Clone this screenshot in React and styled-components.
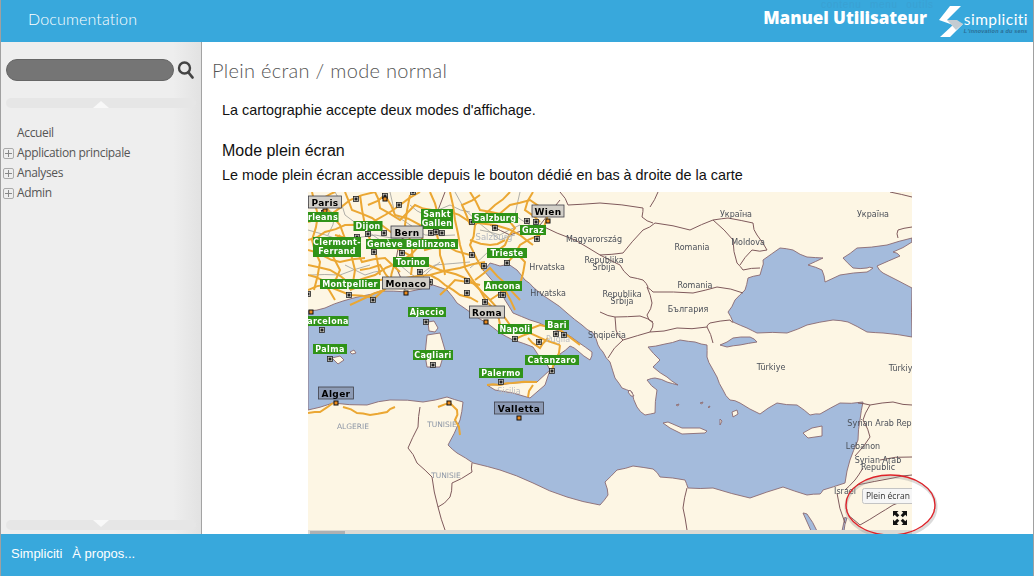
import React from 'react';
import styled, { createGlobalStyle } from 'styled-components';

const GlobalStyle = createGlobalStyle`
  html, body {
    margin: 0;
    padding: 0;
    height: 100%;
    overflow: hidden;
    background: #fff;
  }
  #root {
    height: 100%;
  }
`;

const Page = styled.div`
  display: flex;
  flex-direction: column;
  height: 576px;
  box-sizing: border-box;
  border-left: 1px solid #a0a0a0;
  border-right: 1px solid #a0a0a0;
  font-family: 'Liberation Sans', Arial, sans-serif;
`;

const Header = styled.header`
  position: relative;
  display: flex;
  align-items: center;
  flex: 0 0 42px;
  height: 42px;
  padding: 0 5px 0 27px;
  box-sizing: border-box;
  background: #38a8dc;
  color: #fff;
`;

const DocTitle = styled.div`
  flex: 1;
  margin-bottom: 6px;
  font-family: Lato, sans-serif;
  font-size: 16px;
  font-weight: 300;
  letter-spacing: 0.15px;
`;

const GhostLinks = styled.div`
  position: absolute;
  top: 0;
  left: 820px;
  color: #3aa1d3;
  font-size: 10px;
  line-height: 9px;
  letter-spacing: 0.7px;
  word-spacing: 5px;
  white-space: nowrap;
`;

const ManualTitle = styled.div`
  margin: 0 11px 6px 0;
  font-family: 'Open Sans', sans-serif;
  font-size: 17px;
  font-weight: 800;
  line-height: 16px;
  letter-spacing: -0.05px;
  white-space: nowrap;
`;

const Logo = styled.div`
  display: flex;
  align-items: flex-start;
  height: 32px;
  margin-top: 1px;
`;

const LogoText = styled.div`
  display: flex;
  flex-direction: column;
  padding-top: 6px;
`;

const LogoName = styled.span`
  font-family: Lato, sans-serif;
  font-size: 15.5px;
  font-weight: 400;
  line-height: 15px;
  letter-spacing: 0.45px;
`;

const LogoTag = styled.span`
  font-family: 'Liberation Sans', sans-serif;
  font-size: 5.5px;
  font-style: italic;
  font-weight: 700;
  line-height: 8px;
  letter-spacing: 0.2px;
  color: #2a6f96;
  white-space: nowrap;
`;

const Main = styled.div`
  display: flex;
  flex: 1;
  min-height: 0;
`;

const Sidebar = styled.aside`
  display: flex;
  flex-direction: column;
  flex: 0 0 201px;
  box-sizing: border-box;
  padding: 17px 5px 4px;
  background: linear-gradient(to right, #eeeeee 86%, #e2e2e2 100%);
  border-right: 1px solid #a3a3a3;
`;

const SearchRow = styled.div`
  display: flex;
  align-items: center;
  gap: 3px;
`;

const SearchField = styled.div`
  width: 168px;
  height: 22px;
  box-sizing: border-box;
  background: #757575;
  border: 1px solid #666;
  border-radius: 11px;
`;

const ScrollBar = styled.div`
  display: flex;
  justify-content: center;
  align-items: ${props => (props.$down ? 'flex-start' : 'flex-end')};
  width: 190px;
  height: 10px;
  margin-top: ${props => (props.$down ? 'auto' : '17px')};
  background: #e6e6e6;
  border-radius: 5px;
`;

const Triangle = styled.div`
  width: 0;
  height: 0;
  border-left: 8px solid transparent;
  border-right: 8px solid transparent;
  border-${props => (props.$down ? 'top' : 'bottom')}: 7px solid #f8f8f8;
`;

const Tree = styled.ul`
  margin: 14px 0 0 -3px;
  padding: 0;
  list-style: none;
`;

const TreeRow = styled.li`
  display: flex;
  align-items: center;
  gap: 3px;
  height: 20px;
  color: #555;
  font-family: 'Open Sans', sans-serif;
  font-size: 12px;
  letter-spacing: -0.35px;
`;

const PlusBox = styled.span`
  position: relative;
  flex: 0 0 11px;
  width: 11px;
  height: 11px;
  box-sizing: border-box;
  margin-top: 2px;
  border: 1px solid #aaa;
  border-radius: 2px;
  visibility: ${props => (props.$hidden ? 'hidden' : 'visible')};

  &::before {
    content: '';
    position: absolute;
    left: 1px;
    right: 1px;
    top: 4px;
    height: 1px;
    background: #888;
  }

  &::after {
    content: '';
    position: absolute;
    top: 1px;
    bottom: 1px;
    left: 4px;
    width: 1px;
    background: #888;
  }
`;

const Content = styled.main`
  flex: 1;
  min-width: 0;
  overflow: hidden;
  padding: 16px 0 0 10px;
  background: #fff;
  color: #111;
`;

const PageTitle = styled.h1`
  margin: 0;
  font-family: Lato, sans-serif;
  font-size: 20px;
  font-weight: 300;
  line-height: 24px;
  letter-spacing: 0.3px;
  color: #555;
`;

const Body = styled.div`
  padding-left: 10px;
`;

const Paragraph = styled.p`
  margin: ${props => props.$top || 0}px 0 0;
  font-size: 14.4px;
  line-height: 20px;
`;

const SubTitle = styled.h3`
  margin: 21px 0 0;
  font-size: 16px;
  font-weight: 400;
  line-height: 20px;
`;

const MapFigure = styled.figure`
  margin: 7px 0 0 86px;
  width: 632px;
  height: 342px;
`;

const MapSvg = styled.svg`
  display: block;
  filter: blur(0.35px);
`;

const Footer = styled.footer`
  display: flex;
  align-items: center;
  gap: 10px;
  flex: 0 0 42px;
  padding: 0 0 4px 10px;
  box-sizing: border-box;
  background: #38a8dc;
  color: #fff;
  font-size: 13px;
`;

const ChipRect = styled.rect`
  fill: ${props => (props.$capital ? (props.$sea ? '#8d9bb5' : '#d2cfc8') : '#2f9318')};
  stroke: ${props => (props.$capital ? '#3f3f48' : 'none')};
  stroke-width: 0.8;
`;

const ChipText = styled.text`
  fill: ${props => (props.$capital ? '#000' : '#fff')};
  font-family: 'DejaVu Sans', sans-serif;
  font-size: ${props => (props.$capital ? 9 : 8)}px;
  font-weight: 700;
  letter-spacing: 0.35px;
  text-anchor: middle;
`;

const MapText = styled.text`
  fill: ${props => props.$fill || '#4a4f58'};
  font-family: 'DejaVu Sans', sans-serif;
  font-size: ${props => props.$size || 8}px;
  text-anchor: ${props => props.$anchor || 'middle'};
`;

const TipRect = styled.rect`
  fill: #f6f6f6;
  stroke: #c4c4c4;
`;

const TipText = styled.text`
  fill: #333;
  font-family: 'Open Sans', sans-serif;
  font-size: 8.5px;
`;

// small pseudo random wobble so that coasts and roads don't look ruled
const wobble = (i, size) => {
  const s = Math.sin(i * 12.9898) * 43758.5453;
  return (s - Math.floor(s) - 0.5) * size;
};

const roughen = (text, size = 1.6) => {
  const n = text.match(/-?[\d.]+/g).map(Number);
  const out = [];
  for (let i = 0; i + 1 < n.length; i += 2) {
    out.push(`${n[i]} ${n[i + 1]}`);
    if (i + 3 < n.length) {
      const mx = (n[i] + n[i + 2]) / 2 + wobble(i + n[i], size);
      const my = (n[i + 1] + n[i + 3]) / 2 + wobble(i + n[i + 1] + 7, size);
      out.push(`${mx.toFixed(1)} ${my.toFixed(1)}`);
    }
  }
  return out.join(' ');
};

const closedPath = text => `M${roughen(text)} Z`;

const SEA =
  '308 311 325 308 343 301 362 296 380 291 407 292 433 285 447 290 457 303 470 312 487 323 500 333 513 340 533 347 540 358 548 366 552 372 556 362 560 354 570 346 578 351 590 360 592 352 578 342 565 333 547 327 530 320 513 313 505 300 500 290 490 278 483 270 490 263 500 266 507 263 517 270 525 280 533 287 550 300 567 313 582 325 593 333 598 345 603 352 610 362 615 378 622 388 632 392 637 407 645 415 655 413 657 390 647 380 655 378 667 382 678 385 667 377 653 367 660 360 648 347 665 344 680 340 695 342 707 345 707 357 712 368 717 377 723 390 730 400 740 403 760 414 777 403 797 405 810 415 820 414 840 403 863 402 860 420 858 440 850 460 845 483 823 490 820 494 807 495 783 487 750 498 713 488 688 488 685 480 660 477 653 469 633 466 617 470 605 482 608 495 600 505 567 497 533 483 500 470 473 463 457 453 448 445 460 420 463 402 447 397 423 402 390 400 367 405 333 403 308 410';

const BLACK_SEA =
  '762 268 763 260 780 248 793 250 807 257 823 258 808 265 822 270 825 282 840 275 867 272 873 268 867 268 853 268 843 258 857 248 887 245 912 238 912 242 893 252 900 256 877 266 883 273 912 288 912 337 883 333 867 332 848 322 833 320 807 325 787 333 757 333 747 328 733 322 728 312 735 300 745 290 748 278 760 275';

const MARMARA = '720 345 733 338 750 337 757 342 740 345 727 347';

const ISLANDS = [
  '487 385 500 385 513 383 537 382 550 370 545 385 530 398 513 393 495 390',
  '428 322 434 321 438 328 435 332 429 331',
  '427 335 440 333 445 350 440 367 427 367 425 355',
  '332 358 340 356 344 360 338 364',
  '350 352 354 350 356 353 352 354',
  '663 423 668 422 682 428 700 428 707 431 705 433 682 434 670 428',
  '803 433 812 428 822 426 822 436 808 438',
  '732 412 737 410 738 414 733 417',
  '628 392 630 390 634 396 631 396',
  '720 419 722 421 720 425',
  '676 405 679 404 678 406',
  '708 407 710 406 709 408',
  '700 403 703 402 702 404',
];

const GULFS = ['803 513 807 514 817 531 812 533', '845 517 847 518 844 531 842 531'];

const ROADS = [
  '308 222 330 215 350 200 375 192',
  '308 240 325 232 345 225 368 226 385 215 400 205 420 192',
  '325 205 340 225 350 250 355 270 350 290',
  '350 290 380 280 406 278 430 275 460 268 485 262',
  '385 240 400 250 420 262 440 270 470 280 490 300 510 325',
  '430 192 438 215 437 235 440 255 445 275',
  '445 210 470 222 495 225 520 235 533 245',
  '495 218 510 205 530 200 548 215',
  '548 215 540 235 520 245 507 263',
  '308 265 330 270 350 284 375 275 400 262 420 245',
  '308 290 325 285 350 295 375 298',
  '360 195 365 225 375 250 380 275',
  '410 195 405 225 412 250 411 275',
  '450 192 455 220 460 245 465 268',
  '440 295 455 280 480 285',
  '483 270 470 245 475 225 495 205 510 192',
  '490 300 505 290 515 310',
  '513 340 530 333 545 340 560 345',
  '560 345 555 360 552 370',
  '520 330 540 325 560 330 580 345',
  '308 250 322 255 340 262 365 258',
  '308 205 325 197 335 192',
  '470 192 480 210 505 215',
  '368 205 385 195 395 215 420 225 445 225',
  '470 240 490 245 505 240',
  '350 305 365 298 385 290',
  '312 192 318 215 312 240 320 262 314 290',
  '335 235 350 240 362 262 385 258 400 272',
  '345 192 352 210 372 218 395 235',
  '375 192 380 208 400 220 415 205 432 210',
  '420 225 425 250 445 245 470 255',
  '395 262 390 285 375 298',
  '430 275 445 285 460 295 478 302',
  '470 225 462 205 480 195',
  '505 215 515 228 505 245 490 255',
  '533 192 525 210 540 222',
  '465 268 480 290 495 310 500 325',
  '475 280 490 268 505 283 520 300',
  '510 250 525 262 520 285',
  '330 285 340 270 330 250 340 235',
  '308 275 322 280 335 300',
  '360 270 380 265 395 285',
  '528 338 540 348 548 338',
  '308 413 320 412 333 403',
  '343 407 357 413 370 415 387 412 395 407',
  '438 407 450 403 457 410 455 420 460 435',
  '487 385 500 385 513 383 537 382',
  '528 397 533 385',
];

const MINOR_ROADS = [
  '308 230 340 240 375 235 410 240',
  '335 192 345 215 380 240',
  '390 192 395 215 425 235 455 235',
  '455 192 465 210 500 240 515 235',
  '520 192 515 215 530 225',
  '310 275 340 275 370 265',
  '420 275 435 265 470 262',
  '470 268 490 250 520 255',
  '318 200 335 215 328 235',
  '345 265 365 275 385 270',
  '410 205 425 215 450 205 470 212',
  '480 230 500 235 520 225',
  '400 265 420 280 440 262',
];

const BORDERS = [
  '600 255 623 253 643 230 655 223 690 230 713 220 728 218',
  '600 203 643 208 642 217 653 223',
  '650 207 658 192',
  '713 220 733 240 737 263 743 270 760 268',
  '728 218 753 223 757 235 767 250 752 250 740 265',
  '647 287 653 292 693 293 717 287 743 293',
  '620 265 630 277 643 280 648 287',
  '647 287 652 303 647 315 653 323 650 332',
  '650 332 677 328 707 327 710 323 730 320 733 322',
  '707 327 713 343',
  '623 340 608 358',
  '615 317 640 316 653 322',
  '600 312 615 317 616 330 623 340 650 332',
  '600 255 620 265',
  '560 192 568 205 600 203',
  '540 225 575 240 600 255',
  '490 225 510 235 540 225 560 200',
  '445 192 430 225 400 240 395 265 405 290',
  '420 407 418 427 408 448 417 463 432 477 438 507 445 530',
  '438 507 450 497 452 483 472 472 472 463',
  '687 488 683 508 687 530',
  '858 403 870 405 893 402 912 405',
  '870 405 863 420 870 437 855 456',
  '880 460 912 457',
  '863 468 855 480 845 490',
  '857 485 893 478 912 475',
  '848 515 860 525 880 513 893 505 912 500',
  '837 493 845 523',
  '898 230 912 227',
  '898 230 898 238',
  '890 192 912 197',
];

const CHIPS = [
  { x: 323, y: 217, w: 31, lines: ['rleans'] },
  { x: 368, y: 226, w: 29, lines: ['Dijon'] },
  { x: 437, y: 219, w: 32, lines: ['Sankt', 'Gallen'] },
  { x: 495, y: 218, w: 46, lines: ['Salzburg'] },
  { x: 533, y: 230, w: 26, lines: ['Graz'] },
  { x: 337, y: 247, w: 48, lines: ['Clermont-', 'Ferrand'] },
  { x: 385, y: 244, w: 38, lines: ['Genève'] },
  { x: 431, y: 244, w: 54, lines: ['Bellinzona'] },
  { x: 507, y: 253, w: 40, lines: ['Trieste'] },
  { x: 411, y: 262, w: 36, lines: ['Torino'] },
  { x: 503, y: 286, w: 38, lines: ['Ancona'] },
  { x: 350, y: 284, w: 60, lines: ['Montpellier'] },
  { x: 427, y: 312, w: 38, lines: ['Ajaccio'] },
  { x: 328, y: 321, w: 41, lines: ['arcelona'] },
  { x: 515, y: 329, w: 34, lines: ['Napoli'] },
  { x: 557, y: 325, w: 24, lines: ['Bari'] },
  { x: 330, y: 349, w: 34, lines: ['Palma'] },
  { x: 433, y: 355, w: 40, lines: ['Cagliari'] },
  { x: 552, y: 360, w: 54, lines: ['Catanzaro'] },
  { x: 501, y: 373, w: 44, lines: ['Palermo'] },
];

const CAPITALS = [
  { x: 325, y: 202, w: 33, name: 'Paris' },
  { x: 407, y: 232, w: 32, name: 'Bern' },
  { x: 548, y: 211, w: 32, name: 'Wien' },
  { x: 406, y: 283, w: 47, name: 'Monaco' },
  { x: 487, y: 312, w: 35, name: 'Roma' },
  { x: 336, y: 393, w: 35, name: 'Alger', sea: true },
  { x: 519, y: 408, w: 49, name: 'Valletta', sea: true },
];

const PLACE_NAMES = [
  { x: 494, y: 240, t: 'Salzburg', fill: '#b3b8c0', size: 8.5 },
  { x: 547, y: 270, t: 'Hrvatska' },
  { x: 548, y: 296, t: 'Hrvatska' },
  { x: 558, y: 342, t: 'Puglia', fill: '#b9bcc2' },
  { x: 509, y: 394, t: 'Sicilia', fill: '#b9bcc2' },
  { x: 353, y: 429, t: 'ALGERIE', fill: '#8d96a6', size: 7.5 },
  { x: 442, y: 427, t: 'TUNISIE', fill: '#8d96a6', size: 7.5 },
  { x: 446, y: 478, t: 'TUNISIE', fill: '#8d96a6', size: 7.5 },
  { x: 594, y: 242, t: 'Magyarország' },
  { x: 604, y: 263, t: 'Republika' },
  { x: 604, y: 270, t: 'Srbija' },
  { x: 622, y: 297, t: 'Republika' },
  { x: 622, y: 304, t: 'Srbija' },
  { x: 607, y: 338, t: 'Shqipëria' },
  { x: 692, y: 250, t: 'Romania' },
  { x: 695, y: 288, t: 'Romania' },
  { x: 688, y: 312, t: 'България' },
  { x: 748, y: 245, t: 'Moldova' },
  { x: 736, y: 217, t: 'Україна' },
  { x: 873, y: 217, t: 'Україна' },
  { x: 771, y: 370, t: 'Türkiye' },
  { x: 903, y: 371, t: 'Türkiye' },
  { x: 889, y: 426, t: 'Syrian Arab Republic' },
  { x: 863, y: 449, t: 'Lebanon' },
  { x: 878, y: 463, t: 'Syrian Arab' },
  { x: 878, y: 470, t: 'Republic' },
  { x: 845, y: 494, t: 'Israel' },
];

const MARKERS = [
  [324, 213], [356, 199], [385, 196], [399, 205], [357, 237], [368, 234], [384, 233],
  [374, 252], [402, 253], [431, 233], [436, 232], [442, 233], [428, 242], [472, 222],
  [495, 228], [472, 255], [484, 266], [507, 263], [537, 239], [536, 222], [527, 221],
  [420, 272], [430, 282], [349, 295], [373, 300], [308, 294], [501, 295], [467, 281],
  [467, 293], [485, 302], [503, 295], [322, 330], [426, 322], [433, 365], [330, 359],
  [515, 339], [539, 342], [556, 334], [552, 371], [501, 382], [564, 335], [413, 192],
];

const ORANGE_MARKERS = [
  [325, 211], [385, 199], [548, 221], [406, 293], [486, 322], [311, 312], [336, 403],
  [449, 403], [519, 418],
];

const CityChip = ({ x, y, w, lines }) => {
  const h = lines.length > 1 ? lines.length * 9 + 2 : 10;
  return (
    <g>
      <ChipRect x={x - w / 2} y={y - h / 2} width={w} height={h} />
      {lines.map((line, i) => (
        <ChipText key={line} x={x} y={y - h / 2 + 8 + i * 9}>
          {line}
        </ChipText>
      ))}
    </g>
  );
};

const CapitalChip = ({ x, y, w, name, sea }) => (
  <g>
    <ChipRect $capital $sea={sea} x={x - w / 2} y={y - 6} width={w} height={12} />
    <ChipText $capital x={x} y={y + 3.5}>
      {name}
    </ChipText>
  </g>
);

const Marker = ({ x, y, orange }) => (
  <g>
    <rect x={x - 2.5} y={y - 2.5} width={5} height={5} fill={orange ? '#111' : '#e8e4da'} stroke="#222" strokeWidth={orange ? 0 : 0.8} />
    <rect x={x - 1.5} y={y - 1.5} width={3} height={3} fill={orange ? '#e98a1e' : '#222'} />
  </g>
);

const FullscreenArrow = ({ rotate }) => (
  <g transform={`rotate(${rotate} 900 518)`}>
    <path d="M893 511 H898.5 L896.8 512.7 L899.3 515.2 L897.2 517.3 L894.7 514.8 L893 516.5 Z" fill="#111" />
  </g>
);

const MediterraneanMap = () => (
  <MapSvg width="632" height="342" viewBox="308 192 632 342" xmlns="http://www.w3.org/2000/svg">
    <defs>
      <clipPath id="mapArea">
        <rect x="308" y="192" width="604" height="342" />
      </clipPath>
    </defs>
    <rect x="308" y="192" width="632" height="342" fill="#fff" />
    <g clipPath="url(#mapArea)">
      <rect x="308" y="192" width="604" height="342" fill="#fdf6e4" />
      {[SEA, BLACK_SEA, MARMARA, ...GULFS].map(d => (
        <path key={d} d={closedPath(d)} fill="#a4bbdc" stroke="#8a6a72" strokeWidth="0.9" />
      ))}
      {ISLANDS.map(d => (
        <path key={d} d={`M${d} Z`} fill="#fdf6e4" stroke="#8a6a72" strokeWidth="0.9" />
      ))}
      {MINOR_ROADS.map(p => (
        <polyline key={p} points={roughen(p, 3)} fill="none" stroke="#9c9c98" strokeWidth="0.8" />
      ))}
      {BORDERS.map(p => (
        <polyline key={p} points={roughen(p, 2.5)} fill="none" stroke="#7f5a5c" strokeWidth="1" />
      ))}
      {ROADS.map(p => (
        <polyline key={p} points={roughen(p, 3)} fill="none" stroke="#eba733" strokeWidth="2" />
      ))}
      {PLACE_NAMES.map(p => (
        <MapText key={`${p.t}${p.x}`} x={p.x} y={p.y} $fill={p.fill} $size={p.size}>
          {p.t}
        </MapText>
      ))}
      {MARKERS.map(([x, y]) => (
        <Marker key={`${x}-${y}`} x={x} y={y} />
      ))}
      {ORANGE_MARKERS.map(([x, y]) => (
        <Marker key={`${x}-${y}`} x={x} y={y} orange />
      ))}
      {CHIPS.map(c => (
        <CityChip key={c.lines[0]} {...c} />
      ))}
      {CAPITALS.map(c => (
        <CapitalChip key={c.name} {...c} />
      ))}
      <rect x="308" y="530" width="604" height="4" fill="#dcdad4" />
      <rect x="310" y="531" width="35" height="3" fill="#aeb0b2" />
      <TipRect x="862.5" y="488.5" width="60" height="15" rx="2" />
      <TipText x="866" y="499">Plein écran</TipText>
      {[0, 90, 180, 270].map(r => (
        <FullscreenArrow key={r} rotate={r} />
      ))}
    </g>
    <ellipse cx="891" cy="507" rx="45" ry="30" fill="none" stroke="#999" strokeOpacity="0.35" strokeWidth="3" />
    <ellipse cx="890.5" cy="505" rx="44.5" ry="30" fill="none" stroke="#de2229" strokeWidth="1.4" />
  </MapSvg>
);

function App() {
  return (
    <Page>
      <GlobalStyle />
      <Header>
        <DocTitle>Documentation</DocTitle>
        <GhostLinks>contenu menu outils</GhostLinks>
        <ManualTitle>Manuel Utilisateur</ManualTitle>
        <Logo>
          <svg width="26" height="32" viewBox="0 0 26 32">
            <polygon points="12,0 23,0 9,14 25,18 12,31 2,31 15,19 1,14" fill="#fff" />
            <polygon points="9,14 19,14 25,18 18,24" fill="#c3ccd2" />
          </svg>
          <LogoText>
            <LogoName>simpliciti</LogoName>
            <LogoTag>L'innovation a du sens</LogoTag>
          </LogoText>
        </Logo>
      </Header>
      <Main>
        <Sidebar>
          <SearchRow>
            <SearchField />
            <svg width="18" height="20" viewBox="0 0 18 20">
              <circle cx="7.5" cy="8" r="5.5" fill="none" stroke="#444" strokeWidth="2.4" />
              <line x1="11.5" y1="12.5" x2="15.5" y2="17.5" stroke="#444" strokeWidth="2.8" strokeLinecap="round" />
            </svg>
          </SearchRow>
          <ScrollBar>
            <Triangle />
          </ScrollBar>
          <Tree>
            <TreeRow>
              <PlusBox $hidden />
              Accueil
            </TreeRow>
            <TreeRow>
              <PlusBox />
              Application principale
            </TreeRow>
            <TreeRow>
              <PlusBox />
              Analyses
            </TreeRow>
            <TreeRow>
              <PlusBox />
              Admin
            </TreeRow>
          </Tree>
          <ScrollBar $down>
            <Triangle $down />
          </ScrollBar>
        </Sidebar>
        <Content>
          <PageTitle>Plein écran / mode normal</PageTitle>
          <Body>
            <Paragraph $top={18}>La cartographie accepte deux modes d'affichage.</Paragraph>
            <SubTitle>Mode plein écran</SubTitle>
            <Paragraph $top={4}>Le mode plein écran accessible depuis le bouton dédié en bas à droite de la carte</Paragraph>
            <MapFigure>
              <MediterraneanMap />
            </MapFigure>
          </Body>
        </Content>
      </Main>
      <Footer>
        <span>Simpliciti</span>
        <span>À propos...</span>
      </Footer>
    </Page>
  );
}

export default App;
